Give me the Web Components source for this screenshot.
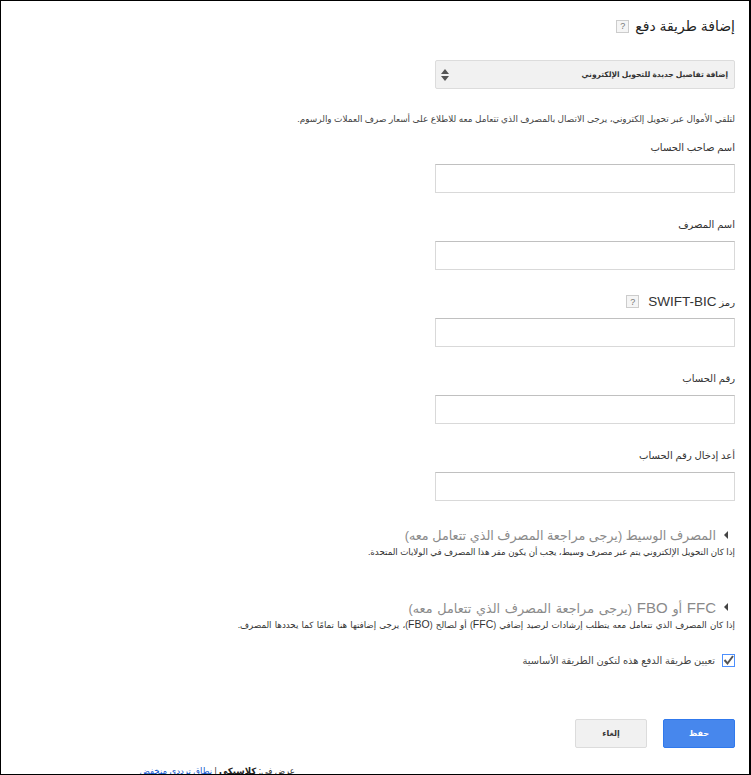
<!DOCTYPE html>
<html lang="ar" dir="rtl">
<head>
<meta charset="utf-8">
<style>
  html, body { margin: 0; height: 775px; overflow: hidden; background: #fff; }
  body { font-family: "Liberation Sans", "DejaVu Sans", sans-serif; color: #222; }
</style>
</head>
<body>
<template id="help-tpl">
  <style>
    :host { display: inline-flex; align-items: center; justify-content: center; width: 11px; height: 11px;
      border: 1px solid #ccc; background: #f5f5f5; color: #777; font: 9px "Liberation Sans", sans-serif; }
  </style>?
</template>

<template id="field-tpl">
  <style>
    :host { display: block; width: 300px; }
    label { display: flex; align-items: center; gap: 9px; height: 17px; font-size: 10px; color: #333; }
    .box { height: 27px; margin-top: 8px; border: 1px solid #d9d9d9; border-top-color: #c0c0c0; background: #fff; }
  </style>
  <label><span><slot></slot></span><slot name="help"></slot></label>
  <div class="box"></div>
</template>

<template id="select-tpl">
  <style>
    :host { display: flex; align-items: center; justify-content: space-between; box-sizing: border-box; width: 300px; height: 29px;
      padding: 0 6px 0 5px; background: #f1f1f1; border: 1px solid #dcdcdc; border-radius: 2px;
      font-size: 7.5px; font-weight: bold; color: #333; }
    svg { display: block; }
  </style>
  <span><slot></slot></span>
  <svg width="8" height="14" viewBox="0 0 8 14"><path d="M4 1 8 6H0zM0 8h8l-4 5z" fill="#555"/></svg>
</template>

<template id="section-tpl">
  <style>
    :host { display: block; }
    .head { display: flex; align-items: center; gap: 8px; height: 20px; font-size: 12.75px; color: #8a8a8a; white-space: nowrap; }
    .arrow { flex: none; width: 0; height: 0; border-style: solid; border-width: 4px 4px 4px 0; border-color: transparent #444 transparent transparent; margin-right: 7px; }
    .desc { font-size: 8.7px; line-height: 12px; height: 12px; color: #333; margin-top: 1px; white-space: nowrap; }
  </style>
  <div class="head"><span class="arrow"></span><span><slot name="title"></slot></span></div>
  <div class="desc"><slot></slot></div>
</template>

<template id="check-tpl">
  <style>
    :host { display: flex; align-items: center; gap: 7px; font-size: 9.9px; color: #444; }
    svg { display: block; flex: none; }
  </style>
  <svg width="13" height="13" viewBox="0 0 13 13">
    <rect x=".5" y=".5" width="12" height="12" fill="#fff" stroke="#4d90fe"/>
    <path d="M2.5 6 5.5 9.5 11 2" fill="none" stroke="#555" stroke-width="2"/>
  </svg>
  <span><slot></slot></span>
</template>

<template id="button-tpl">
  <style>
    :host { display: flex; align-items: center; justify-content: center; box-sizing: border-box; width: 72px; height: 29px;
      border: 1px solid #dcdcdc; border-radius: 2px; background: #f1f1f1; color: #333; font-size: 8px; font-weight: bold; }
    :host([primary]) { background: #4787ed; border-color: #3079ed; color: #fff; }
  </style>
  <slot></slot>
</template>

<template id="form-tpl">
  <style>
    :host { display: block; box-sizing: border-box; width: 751px; height: 775px; overflow: hidden;
      border: solid #000; border-width: 1px 2px 1px 1px; padding: 15px 14px 0 15px; }
    h1 { margin: 0; display: flex; align-items: center; gap: 6px; height: 20px; font-size: 14px; font-weight: normal; color: #222; }
    .select { margin-top: 24px; }
    .note { margin: 25px 0 0; height: 13px; font-size: 8.9px; color: #444; white-space: nowrap; }
    .fields { display: flex; flex-direction: column; align-items: flex-start; gap: 23px; margin-top: 12px; }
    .sections { display: flex; flex-direction: column; gap: 39px; margin-top: 24px; }
    .check { margin-top: 24px; }
    .actions { display: flex; gap: 16px; margin-top: 52px; }
    .footer { margin: 18px 440px 0 0; font-size: 8.6px; line-height: 11px; color: #333; white-space: nowrap; }
    .footer b { color: #222; }
    .footer a { color: #15c; }
    .swift { font-size: 13.5px; }
    .big { font-size: 15px; }
    .small { font-size: 10.5px; }
    .wide { word-spacing: .8px; }
    .wide-title { word-spacing: 1.2px; }
  </style>
  <h1><span>إضافة طريقة دفع</span><help-mark></help-mark></h1>
  <pay-select class="select">إضافة تفاصيل جديدة للتحويل الإلكتروني</pay-select>
  <p class="note">لتلقي الأموال عبر تحويل إلكتروني، يرجى الاتصال بالمصرف الذي تتعامل معه للاطلاع على أسعار صرف العملات والرسوم.</p>
  <div class="fields">
    <pay-field>اسم صاحب الحساب</pay-field>
    <pay-field>اسم المصرف</pay-field>
    <pay-field>رمز <span class="swift">SWIFT-BIC</span><help-mark slot="help"></help-mark></pay-field>
    <pay-field>رقم الحساب</pay-field>
    <pay-field>أعد إدخال رقم الحساب</pay-field>
  </div>
  <div class="sections">
    <pay-section><span slot="title">المصرف الوسيط (يرجى مراجعة المصرف الذي تتعامل معه)</span>إذا كان التحويل الإلكتروني يتم عبر مصرف وسيط، يجب أن يكون مقر هذا المصرف في الولايات المتحدة.</pay-section>
    <pay-section><span slot="title" class="wide-title"><span class="big">FFC</span> أو <span class="big">FBO</span> (يرجى مراجعة المصرف الذي تتعامل معه)</span><span class="wide">إذا كان المصرف الذي تتعامل معه يتطلب إرشادات لرصيد إضافي (<span class="small">FFC</span>) أو لصالح (<span class="small">FBO</span>)، يرجى إضافتها هنا تمامًا كما يحددها المصرف.</span></pay-section>
  </div>
  <pay-check class="check">تعيين طريقة الدفع هذه لتكون الطريقة الأساسية</pay-check>
  <div class="actions">
    <pay-button primary>حفظ</pay-button>
    <pay-button>إلغاء</pay-button>
  </div>
  <div class="footer">عرض في: <b>كلاسيكي</b> | <a>نطاق ترددي منخفض</a></div>
</template>

<pay-form></pay-form>

<script>
  // every element just stamps its own template into an open shadow root
  const parts = {
    "help-mark": "help-tpl",
    "pay-field": "field-tpl",
    "pay-select": "select-tpl",
    "pay-section": "section-tpl",
    "pay-check": "check-tpl",
    "pay-button": "button-tpl",
    "pay-form": "form-tpl",
  };

  for (const [tag, tpl] of Object.entries(parts)) {
    customElements.define(tag, class extends HTMLElement {
      constructor() {
        super();
        this.attachShadow({ mode: "open" });
        this.shadowRoot.append(document.getElementById(tpl).content.cloneNode(true));
      }
    });
  }
</script>
</body>
</html>
